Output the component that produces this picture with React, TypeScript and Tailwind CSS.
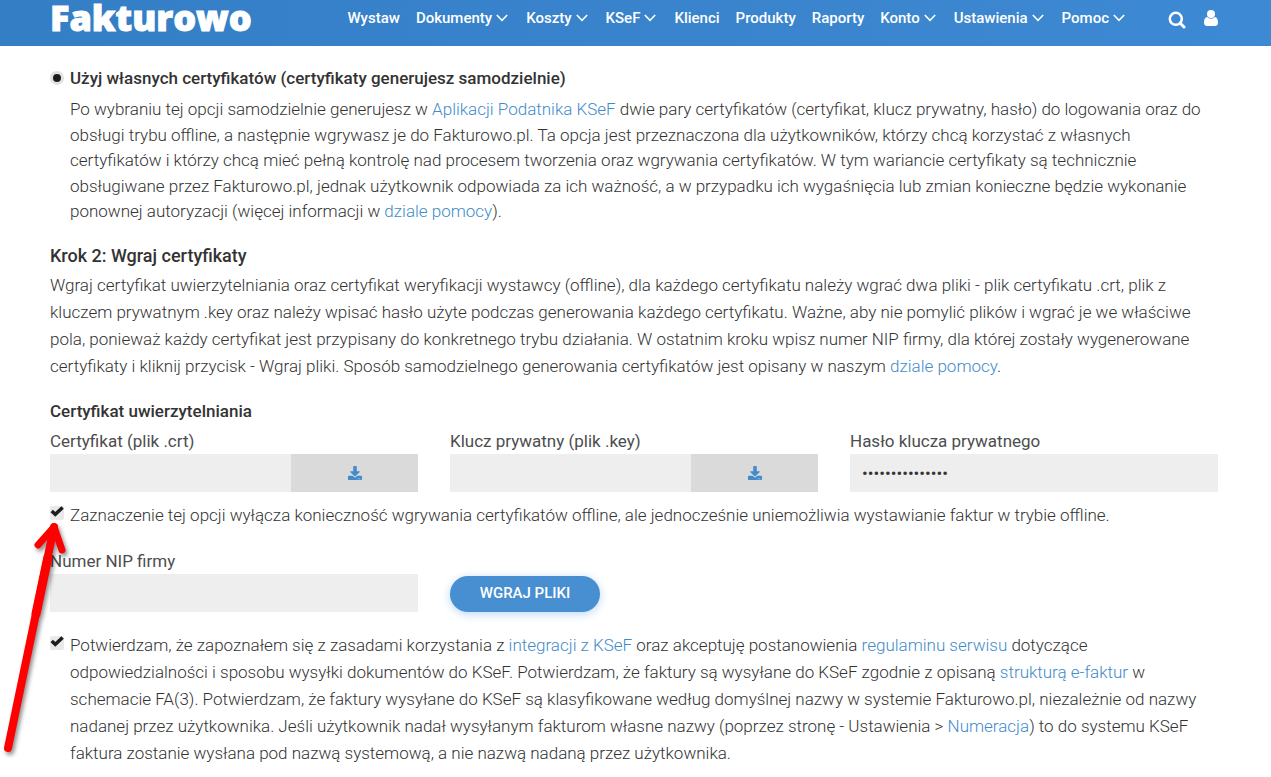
import type { ReactNode } from "react";
import { FaDownload } from "react-icons/fa";

const menu = [
  { label: "Wystaw", more: false },
  { label: "Dokumenty", more: true },
  { label: "Koszty", more: true },
  { label: "KSeF", more: true },
  { label: "Klienci", more: false },
  { label: "Produkty", more: false },
  { label: "Raporty", more: false },
  { label: "Konto", more: true },
  { label: "Ustawienia", more: true },
  { label: "Pomoc", more: true },
];

function Chevron() {
  return (
    <svg viewBox="0 0 12 8" className="h-2 w-3" fill="none" stroke="currentColor" strokeWidth="1.6" aria-hidden="true">
      <path d="M0.8 1 6 6.4 11.2 1" />
    </svg>
  );
}

function TextLink({ children }: { children: ReactNode }) {
  return (
    <a href="#" className="text-[#428bca] hover:underline">
      {children}
    </a>
  );
}

function Header() {
  return (
    <header className="flex h-[46px] items-start justify-between bg-linear-to-r from-[#337ec5] to-[#3e89d3] pr-[53px] pl-[50px] text-white">
      <a
        href="#"
        className="font-['Open_Sans',sans-serif] text-4xl leading-9 font-extrabold [-webkit-text-stroke:1px_white] [stroke-linejoin:round]"
      >
        Fakturowo
      </a>
      <div className="flex items-center pt-1">
        <nav className="flex gap-4 text-[15px] leading-7 font-medium">
          {menu.map((item) => (
            <a key={item.label} href="#" className={item.more ? "flex items-center gap-1 pr-[2px]" : "flex items-center"}>
              {item.label}
              {item.more && <Chevron />}
            </a>
          ))}
        </nav>
        <button type="button" aria-label="Szukaj" className="ml-[41px]">
          <svg viewBox="0 0 18 18" className="mt-[3px] size-[18px]" fill="none" stroke="currentColor" aria-hidden="true">
            <circle cx="7.8" cy="7.8" r="6" strokeWidth="2.5" />
            <path d="m12.200 12.200 3.800 3.800" strokeWidth="3" strokeLinecap="round" />
          </svg>
        </button>
        <button type="button" aria-label="Profil" className="ml-[18px]">
          <svg viewBox="0 0 14 16" className="h-4 w-[14px]" fill="currentColor" aria-hidden="true">
            <circle cx="7" cy="4" r="4" />
            <path d="M3.2 6.9C1 7.2 0 9.3 0 12.4 0 14.4 1 16 3 16h8c2 0 3-1.600 3-3.600 0-3.100-1-5.200-3.200-5.500A5 5 0 0 1 7 8.700 5 5 0 0 1 3.200 6.900Z" />
          </svg>
        </button>
      </div>
    </header>
  );
}

function Tick({ id }: { id: string }) {
  return (
    <span className="grid shrink-0 self-start">
      <input
        id={id}
        type="checkbox"
        defaultChecked
        className="peer col-start-1 row-start-1 size-[14px] appearance-none rounded-xs bg-[#e9e9e9]"
      />
      <svg
        viewBox="0 0 14 14"
        className="pointer-events-none invisible col-start-1 row-start-1 size-[14px] peer-checked:visible"
        fill="none"
        stroke="#1c1c1c"
        strokeWidth="3.4"
        aria-hidden="true"
      >
        <path d="M1.700 4.900 5.300 8.300 12.600 1.400" />
      </svg>
    </span>
  );
}

function FileField({ id, label }: { id: string; label: string }) {
  return (
    <div>
      <label htmlFor={id} className="block leading-[26px] text-[#4d4d4d]">
        {label}
      </label>
      <div className="flex h-[38px]">
        <input id={id} type="text" readOnly className="min-w-0 flex-1 bg-[#eee] px-3" />
        <button
          type="button"
          aria-label="Wybierz plik"
          className="flex w-[127px] items-center justify-center bg-[#dadada] text-sm text-[#428bca]"
        >
          <FaDownload />
        </button>
      </div>
    </div>
  );
}

function Arrow() {
  return (
    <svg
      viewBox="0 0 80 250"
      className="pointer-events-none absolute top-[515px] left-0 h-[250px] w-20 drop-shadow-[2px_3px_2px_rgba(0,0,0,0.45)]"
      fill="none"
      stroke="#fe0000"
      strokeLinecap="round"
      strokeLinejoin="round"
      aria-hidden="true"
    >
      <path d="M8 233 54 12" strokeWidth="8" />
      <path d="M38 30 54 12 62 35" strokeWidth="7" />
      <path d="M36 99 48 42" strokeWidth="9" />
    </svg>
  );
}

export default function App() {
  return (
    <div className="relative min-h-screen bg-white font-[Roboto,sans-serif] text-[17px] text-[#333]">
      <Header />
      <main className="pt-5 pr-[53px] pb-3 pl-[50px]">
        <div className="flex gap-[6px]">
          <input
            id="own"
            type="radio"
            name="mode"
            defaultChecked
            className="mt-[5px] size-[14px] shrink-0 appearance-none rounded-full border-3 border-[#e2e2e2] bg-[#e2e2e2] checked:bg-[#1c1c1c]"
          />
          <div>
            <label htmlFor="own" className="block leading-6 font-medium">
              Użyj własnych certyfikatów (certyfikaty generujesz samodzielnie)
            </label>
            <p className="mt-[7px] leading-normal font-light">
              Po wybraniu tej opcji samodzielnie generujesz w <TextLink>Aplikacji Podatnika KSeF</TextLink> dwie pary
              certyfikatów (certyfikat, klucz prywatny, hasło) do logowania oraz do obsługi trybu offline, a następnie
              wgrywasz je do Fakturowo.pl. Ta opcja jest przeznaczona dla użytkowników, którzy chcą korzystać z własnych
              certyfikatów i którzy chcą mieć pełną kontrolę nad procesem tworzenia oraz wgrywania certyfikatów. W tym
              wariancie certyfikaty są technicznie obsługiwane przez Fakturowo.pl, jednak użytkownik odpowiada za ich
              ważność, a w przypadku ich wygaśnięcia lub zmian konieczne będzie wykonanie ponownej autoryzacji (więcej
              informacji w <TextLink>dziale pomocy</TextLink>).
            </p>
          </div>
        </div>

        <h2 className="mt-[19px] text-lg leading-6 font-medium">Krok 2: Wgraj certyfikaty</h2>
        <p className="mt-1 leading-[27px] font-light">
          Wgraj certyfikat uwierzytelniania oraz certyfikat weryfikacji wystawcy (offline), dla każdego certyfikatu
          należy wgrać dwa pliki - plik certyfikatu .crt, plik z kluczem prywatnym .key oraz należy wpisać hasło użyte
          podczas generowania każdego certyfikatu. Ważne, aby nie pomylić plików i wgrać je we właściwe pola, ponieważ
          każdy certyfikat jest przypisany do konkretnego trybu działania. W ostatnim kroku wpisz numer NIP firmy, dla
          której zostały wygenerowane certyfikaty i kliknij przycisk - Wgraj pliki. Sposób samodzielnego generowania
          certyfikatów jest opisany w naszym <TextLink>dziale pomocy</TextLink>.
        </p>

        <h3 className="mt-[19px] leading-6 font-medium">Certyfikat uwierzytelniania</h3>
        <div className="mt-[5px] grid grid-cols-3 gap-8">
          <FileField id="crt" label="Certyfikat (plik .crt)" />
          <FileField id="key" label="Klucz prywatny (plik .key)" />
          <div>
            <label htmlFor="pass" className="block leading-[26px] text-[#4d4d4d]">
              Hasło klucza prywatnego
            </label>
            <input
              id="pass"
              type="password"
              defaultValue="haslo-do-klucza"
              className="block h-[38px] w-full bg-[#eee] px-3 text-[17px]"
            />
          </div>
        </div>

        <div className="mt-[14px] flex gap-[6px]">
          <Tick id="online" />
          <label htmlFor="online" className="-mt-1 leading-[27px] font-light">
            Zaznaczenie tej opcji wyłącza konieczność wgrywania certyfikatów offline, ale jednocześnie uniemożliwia
            wystawianie faktur w trybie offline.
          </label>
        </div>

        <div className="mt-[19px] grid grid-cols-3 gap-8">
          <div>
            <label htmlFor="nip" className="block leading-[26px] text-[#4d4d4d]">
              Numer NIP firmy
            </label>
            <input id="nip" type="text" className="block h-[38px] w-full bg-[#eee] px-3" />
          </div>
          <div className="flex items-end">
            <button
              type="button"
              className="h-9 w-[150px] rounded-full bg-[#478fd1] text-[15px] font-medium text-white shadow-[0_2px_10px_#bcd7f3]"
            >
              WGRAJ PLIKI
            </button>
          </div>
        </div>

        <div className="mt-6 flex gap-[6px]">
          <Tick id="terms" />
          <label htmlFor="terms" className="-mt-1 leading-[27px] font-light">
            Potwierdzam, że zapoznałem się z zasadami korzystania z <TextLink>integracji z KSeF</TextLink> oraz
            akceptuję postanowienia <TextLink>regulaminu serwisu</TextLink> dotyczące odpowiedzialności i sposobu
            wysyłki dokumentów do KSeF. Potwierdzam, że faktury są wysyłane do KSeF zgodnie z opisaną{" "}
            <TextLink>strukturą e-faktur</TextLink> w schemacie FA(3). Potwierdzam, że faktury wysyłane do KSeF są
            klasyfikowane według domyślnej nazwy w systemie Fakturowo.pl, niezależnie od nazwy nadanej przez
            użytkownika. Jeśli użytkownik nadał wysyłanym fakturom własne nazwy (poprzez stronę - Ustawienia &gt;{" "}
            <TextLink>Numeracja</TextLink>) to do systemu KSeF faktura zostanie wysłana pod nazwą systemową, a nie nazwą
            nadaną przez użytkownika.
          </label>
        </div>
      </main>
      <Arrow />
    </div>
  );
}
